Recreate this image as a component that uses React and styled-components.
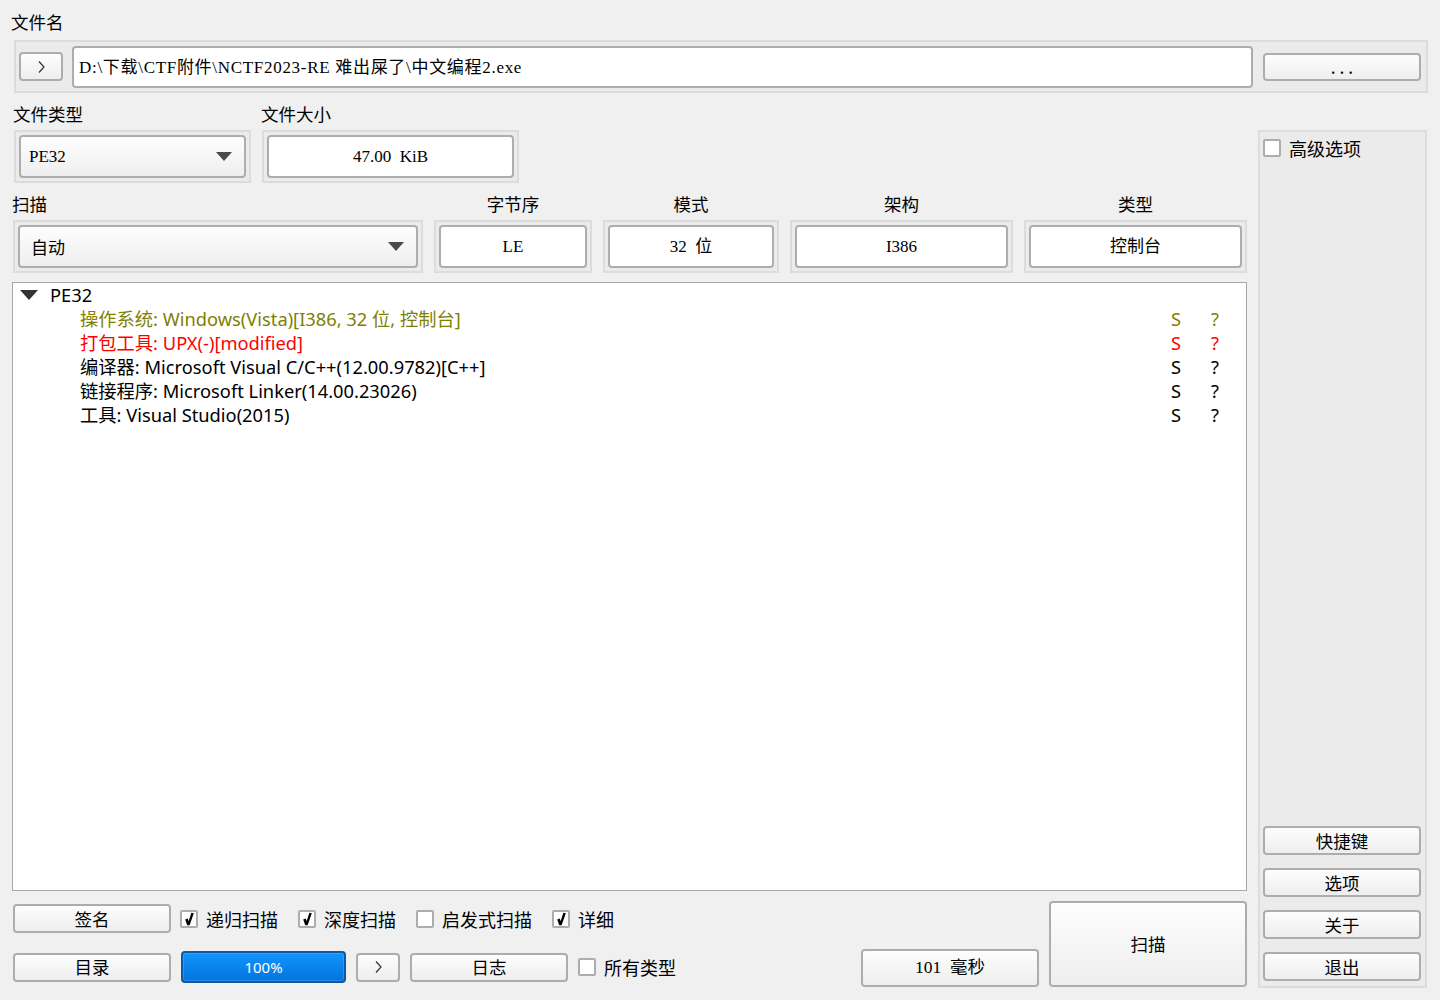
import React from "react";
import styled, { createGlobalStyle } from "styled-components";

const UI = `"Noto Sans CJK SC", "Noto Sans", sans-serif`;
const SANS = `"Noto Sans", "Noto Sans CJK SC", sans-serif`;
const SERIF = `"Liberation Serif", "Noto Sans CJK SC", serif`;

const GlobalStyle = createGlobalStyle`
  html, body { margin: 0; padding: 0; background: #f0f0f0; }
  body { font-family: ${UI}; color: #000; }
  * { box-sizing: border-box; }
`;

const Window = styled.div`
  width: 1440px;
  height: 1000px;
  padding: 10px 13px 12px 12px;
  display: flex;
  flex-direction: column;
  background: #f0f0f0;
  overflow: hidden;
`;

const Label = styled.div`
  font-family: ${UI};
  font-size: 17.5px;
  line-height: 24px;
  height: 24px;
  white-space: nowrap;
  text-align: ${(p) => (p.$center ? "center" : "left")};
  margin-left: ${(p) => (p.$center ? 0 : -1)}px;
`;

const Frame = styled.div`
  border: 2px solid #dcdcdc;
  background: #ebebeb;
  padding: 3px;
  display: flex;
  align-items: center;
  height: 53px;
`;

const FileFrame = styled(Frame)`
  margin: 6px -1px 0 2px;
  padding: 3px 5px 3px 3px;
  gap: 9px;
`;

const Button = styled.button`
  flex: none;
  width: ${(p) => p.$w}px;
  height: ${(p) => p.$h || 29}px;
  border: 2px solid #adadad;
  border-radius: 4px;
  background: linear-gradient(#fdfdfd, #eeeeee);
  font-family: ${(p) => (p.$serif ? SERIF : UI)};
  font-size: 17.5px;
  color: #000;
  padding: 0;
  display: flex;
  align-items: center;
  justify-content: center;
  line-height: 1;
  white-space: pre;
`;

const PathInput = styled.div`
  flex: 1;
  height: 42px;
  background: #fff;
  border: 2px solid #adadad;
  border-radius: 4px;
  padding-left: 5px;
  line-height: 39px;
  font-family: ${SERIF};
  font-size: 17px;
  letter-spacing: 0.7px;
  white-space: pre;
`;

const ValueBox = styled.div`
  flex: 1;
  height: 43px;
  background: #fff;
  border: 2px solid #adadad;
  border-radius: 4px;
  text-align: center;
  line-height: 39px;
  font-family: ${SERIF};
  font-size: 17px;
  white-space: pre;
`;

const Combo = styled.div`
  flex: 1;
  height: 43px;
  border: 2px solid #adadad;
  border-radius: 4px;
  background: linear-gradient(#fefefe, #eeeeee);
  display: flex;
  align-items: center;
  justify-content: space-between;
  padding: 0 12px 0 ${(p) => p.$pl || 8}px;
  font-family: ${(p) => (p.$serif ? SERIF : UI)};
  font-size: 17px;
`;

const Arrow = styled.span`
  width: 0;
  height: 0;
  border-left: 8px solid transparent;
  border-right: 8px solid transparent;
  border-top: 9px solid #4a4a4a;
`;

const Lower = styled.div`
  display: grid;
  grid-template-columns: 1235px 169px;
  column-gap: 11px;
  margin-top: 7px;
  flex: 1;
  min-height: 0;
`;

const LeftCol = styled.div`
  display: flex;
  flex-direction: column;
  padding-top: 2px;
  min-height: 0;
`;

const FieldRow = styled.div`
  display: flex;
  gap: 11px;
  margin-top: ${(p) => p.$mt || 0}px;
  padding-left: ${(p) => p.$pl || 0}px;
`;

const Field = styled.div`
  width: ${(p) => p.$w}px;
  flex: none;
  display: flex;
  flex-direction: column;
  gap: 4px;
`;

const Tree = styled.div`
  margin-top: 9px;
  flex: 1;
  background: #fff;
  border: 1px solid #a8a8a8;
`;

const TreeRow = styled.div`
  display: grid;
  grid-template-columns: 1fr 40px 35px;
  height: 24px;
  align-items: center;
  color: ${(p) => p.$color || "#000"};
  font-family: ${SANS};
  font-size: 18.3px;
  line-height: 24px;
  padding-left: ${(p) => p.$indent}px;
  white-space: nowrap;
`;

const RootLabel = styled.span`
  display: flex;
  align-items: center;
  gap: 12px;
`;

const TreeArrow = styled.span`
  width: 0;
  height: 0;
  border-left: 9px solid transparent;
  border-right: 9px solid transparent;
  border-top: 10px solid #333;
`;

const Bottom = styled.div`
  margin-top: 9px;
  height: 88px;
  display: flex;
  flex: none;
`;

const Controls = styled.div`
  flex: 1;
  display: flex;
  flex-direction: column;
  gap: 18px;
  padding-top: 4px;
`;

const ControlRow = styled.div`
  display: flex;
  align-items: center;
  height: ${(p) => p.$h}px;
  padding-left: 1px;
`;

const CheckGroup = styled.div`
  display: flex;
  align-items: center;
  gap: 20px;
  margin-left: 9px;
`;

const Check = styled.div`
  display: flex;
  align-items: center;
  gap: 8px;
  font-family: ${UI};
  font-size: 18px;
  line-height: 24px;
  white-space: nowrap;
`;

const Box = styled.span`
  width: 18px;
  height: 18px;
  flex: none;
  border: 2px solid #adadad;
  border-radius: 2px;
  background: #fff;
  display: flex;
  align-items: center;
  justify-content: center;
`;

const Gap = styled.span`
  width: 10px;
  flex: none;
`;

const Progress = styled.div`
  width: 165px;
  height: 32px;
  flex: none;
  border: 2px solid #0a5aa8;
  border-radius: 4px;
  background: linear-gradient(#1195fb, #0b84ee 50%, #0574dc);
  box-shadow: inset 0 0 0 1px rgba(255, 255, 255, 0.15);
  color: #fff;
  font-family: ${SANS};
  font-size: 15px;
  display: flex;
  align-items: center;
  justify-content: center;
`;

const TimeButton = styled(Button)`
  align-self: flex-end;
  margin-bottom: 1px;
`;

const ScanButton = styled(Button)`
  margin: 1px 0 0 10px;
`;

const SidePanel = styled.div`
  margin-top: 30px;
  border: 2px solid #dcdcdc;
  background: #ebebeb;
  padding: 4px 4px 5px 3px;
  display: flex;
  flex-direction: column;
`;

const SideButtons = styled.div`
  margin-top: auto;
  display: flex;
  flex-direction: column;
  gap: 13px;
`;

const Chevron = () => (
  <svg width="9" height="14" viewBox="0 0 9 14">
    <polyline points="2,1.5 7,7 2,12.5" fill="none" stroke="#333" strokeWidth="1.2" />
  </svg>
);

const Tick = () => (
  <svg width="12" height="14" viewBox="0 0 12 14">
    <path d="M2.2 7.4 L4.8 6.6 L5.6 9.2 L8.4 0.8 L10.8 1.2 L6.6 13.2 L4.2 13.2 Z" fill="#000" />
  </svg>
);

const CheckItem = ({ checked, children }) => (
  <Check>
    <Box>{checked && <Tick />}</Box>
    {children}
  </Check>
);

const olive = "#808000";
const red = "#ff0000";

const rows = [
  { text: "操作系统: Windows(Vista)[I386, 32 位, 控制台]", color: olive },
  { text: "打包工具: UPX(-)[modified]", color: red },
  { text: "编译器: Microsoft Visual C/C++(12.00.9782)[C++]" },
  { text: "链接程序: Microsoft Linker(14.00.23026)" },
  { text: "工具: Visual Studio(2015)" },
];

export default function App() {
  return (
    <>
      <GlobalStyle />
      <Window>
        <Label>文件名</Label>
        <FileFrame>
          <Button $w={44} $h={29}>
            <Chevron />
          </Button>
          <PathInput>{"D:\\下载\\CTF附件\\NCTF2023-RE 难出屎了\\中文编程2.exe"}</PathInput>
          <Button $w={158} $h={28} style={{ marginLeft: 1 }}>
            {". . ."}
          </Button>
        </FileFrame>

        <Lower>
          <LeftCol>
            <FieldRow $pl={2}>
              <Field $w={237}>
                <Label>文件类型</Label>
                <Frame>
                  <Combo $serif $pl={8}>
                    PE32
                    <Arrow />
                  </Combo>
                </Frame>
              </Field>
              <Field $w={257}>
                <Label>文件大小</Label>
                <Frame>
                  <ValueBox>{"47.00  KiB"}</ValueBox>
                </Frame>
              </Field>
            </FieldRow>

            <FieldRow $mt={9} $pl={1}>
              <Field $w={410}>
                <Label>扫描</Label>
                <Frame>
                  <Combo $pl={11}>
                    自动
                    <Arrow />
                  </Combo>
                </Frame>
              </Field>
              <Field $w={158}>
                <Label $center>字节序</Label>
                <Frame>
                  <ValueBox>LE</ValueBox>
                </Frame>
              </Field>
              <Field $w={176}>
                <Label $center>模式</Label>
                <Frame>
                  <ValueBox>{"32  位"}</ValueBox>
                </Frame>
              </Field>
              <Field $w={223}>
                <Label $center>架构</Label>
                <Frame>
                  <ValueBox>I386</ValueBox>
                </Frame>
              </Field>
              <Field $w={223}>
                <Label $center>类型</Label>
                <Frame>
                  <ValueBox>控制台</ValueBox>
                </Frame>
              </Field>
            </FieldRow>

            <Tree>
              <TreeRow $indent={7}>
                <RootLabel>
                  <TreeArrow />
                  PE32
                </RootLabel>
              </TreeRow>
              {rows.map((r) => (
                <TreeRow key={r.text} $indent={67} $color={r.color}>
                  <span>{r.text}</span>
                  <span>S</span>
                  <span>?</span>
                </TreeRow>
              ))}
            </Tree>

            <Bottom>
              <Controls>
                <ControlRow $h={29}>
                  <Button $w={158}>签名</Button>
                  <CheckGroup>
                    <CheckItem checked>递归扫描</CheckItem>
                    <CheckItem checked>深度扫描</CheckItem>
                    <CheckItem>启发式扫描</CheckItem>
                    <CheckItem checked>详细</CheckItem>
                  </CheckGroup>
                </ControlRow>
                <ControlRow $h={32}>
                  <Button $w={158}>目录</Button>
                  <Gap />
                  <Progress>100%</Progress>
                  <Gap />
                  <Button $w={44}>
                    <Chevron />
                  </Button>
                  <Gap />
                  <Button $w={158}>日志</Button>
                  <Gap />
                  <CheckItem>所有类型</CheckItem>
                </ControlRow>
              </Controls>
              <TimeButton $w={178} $h={38} $serif>
                {"101  毫秒"}
              </TimeButton>
              <ScanButton $w={198} $h={86}>
                扫描
              </ScanButton>
            </Bottom>
          </LeftCol>

          <SidePanel>
            <CheckItem>高级选项</CheckItem>
            <SideButtons>
              <Button $w={158}>快捷键</Button>
              <Button $w={158}>选项</Button>
              <Button $w={158}>关于</Button>
              <Button $w={158}>退出</Button>
            </SideButtons>
          </SidePanel>
        </Lower>
      </Window>
    </>
  );
}
